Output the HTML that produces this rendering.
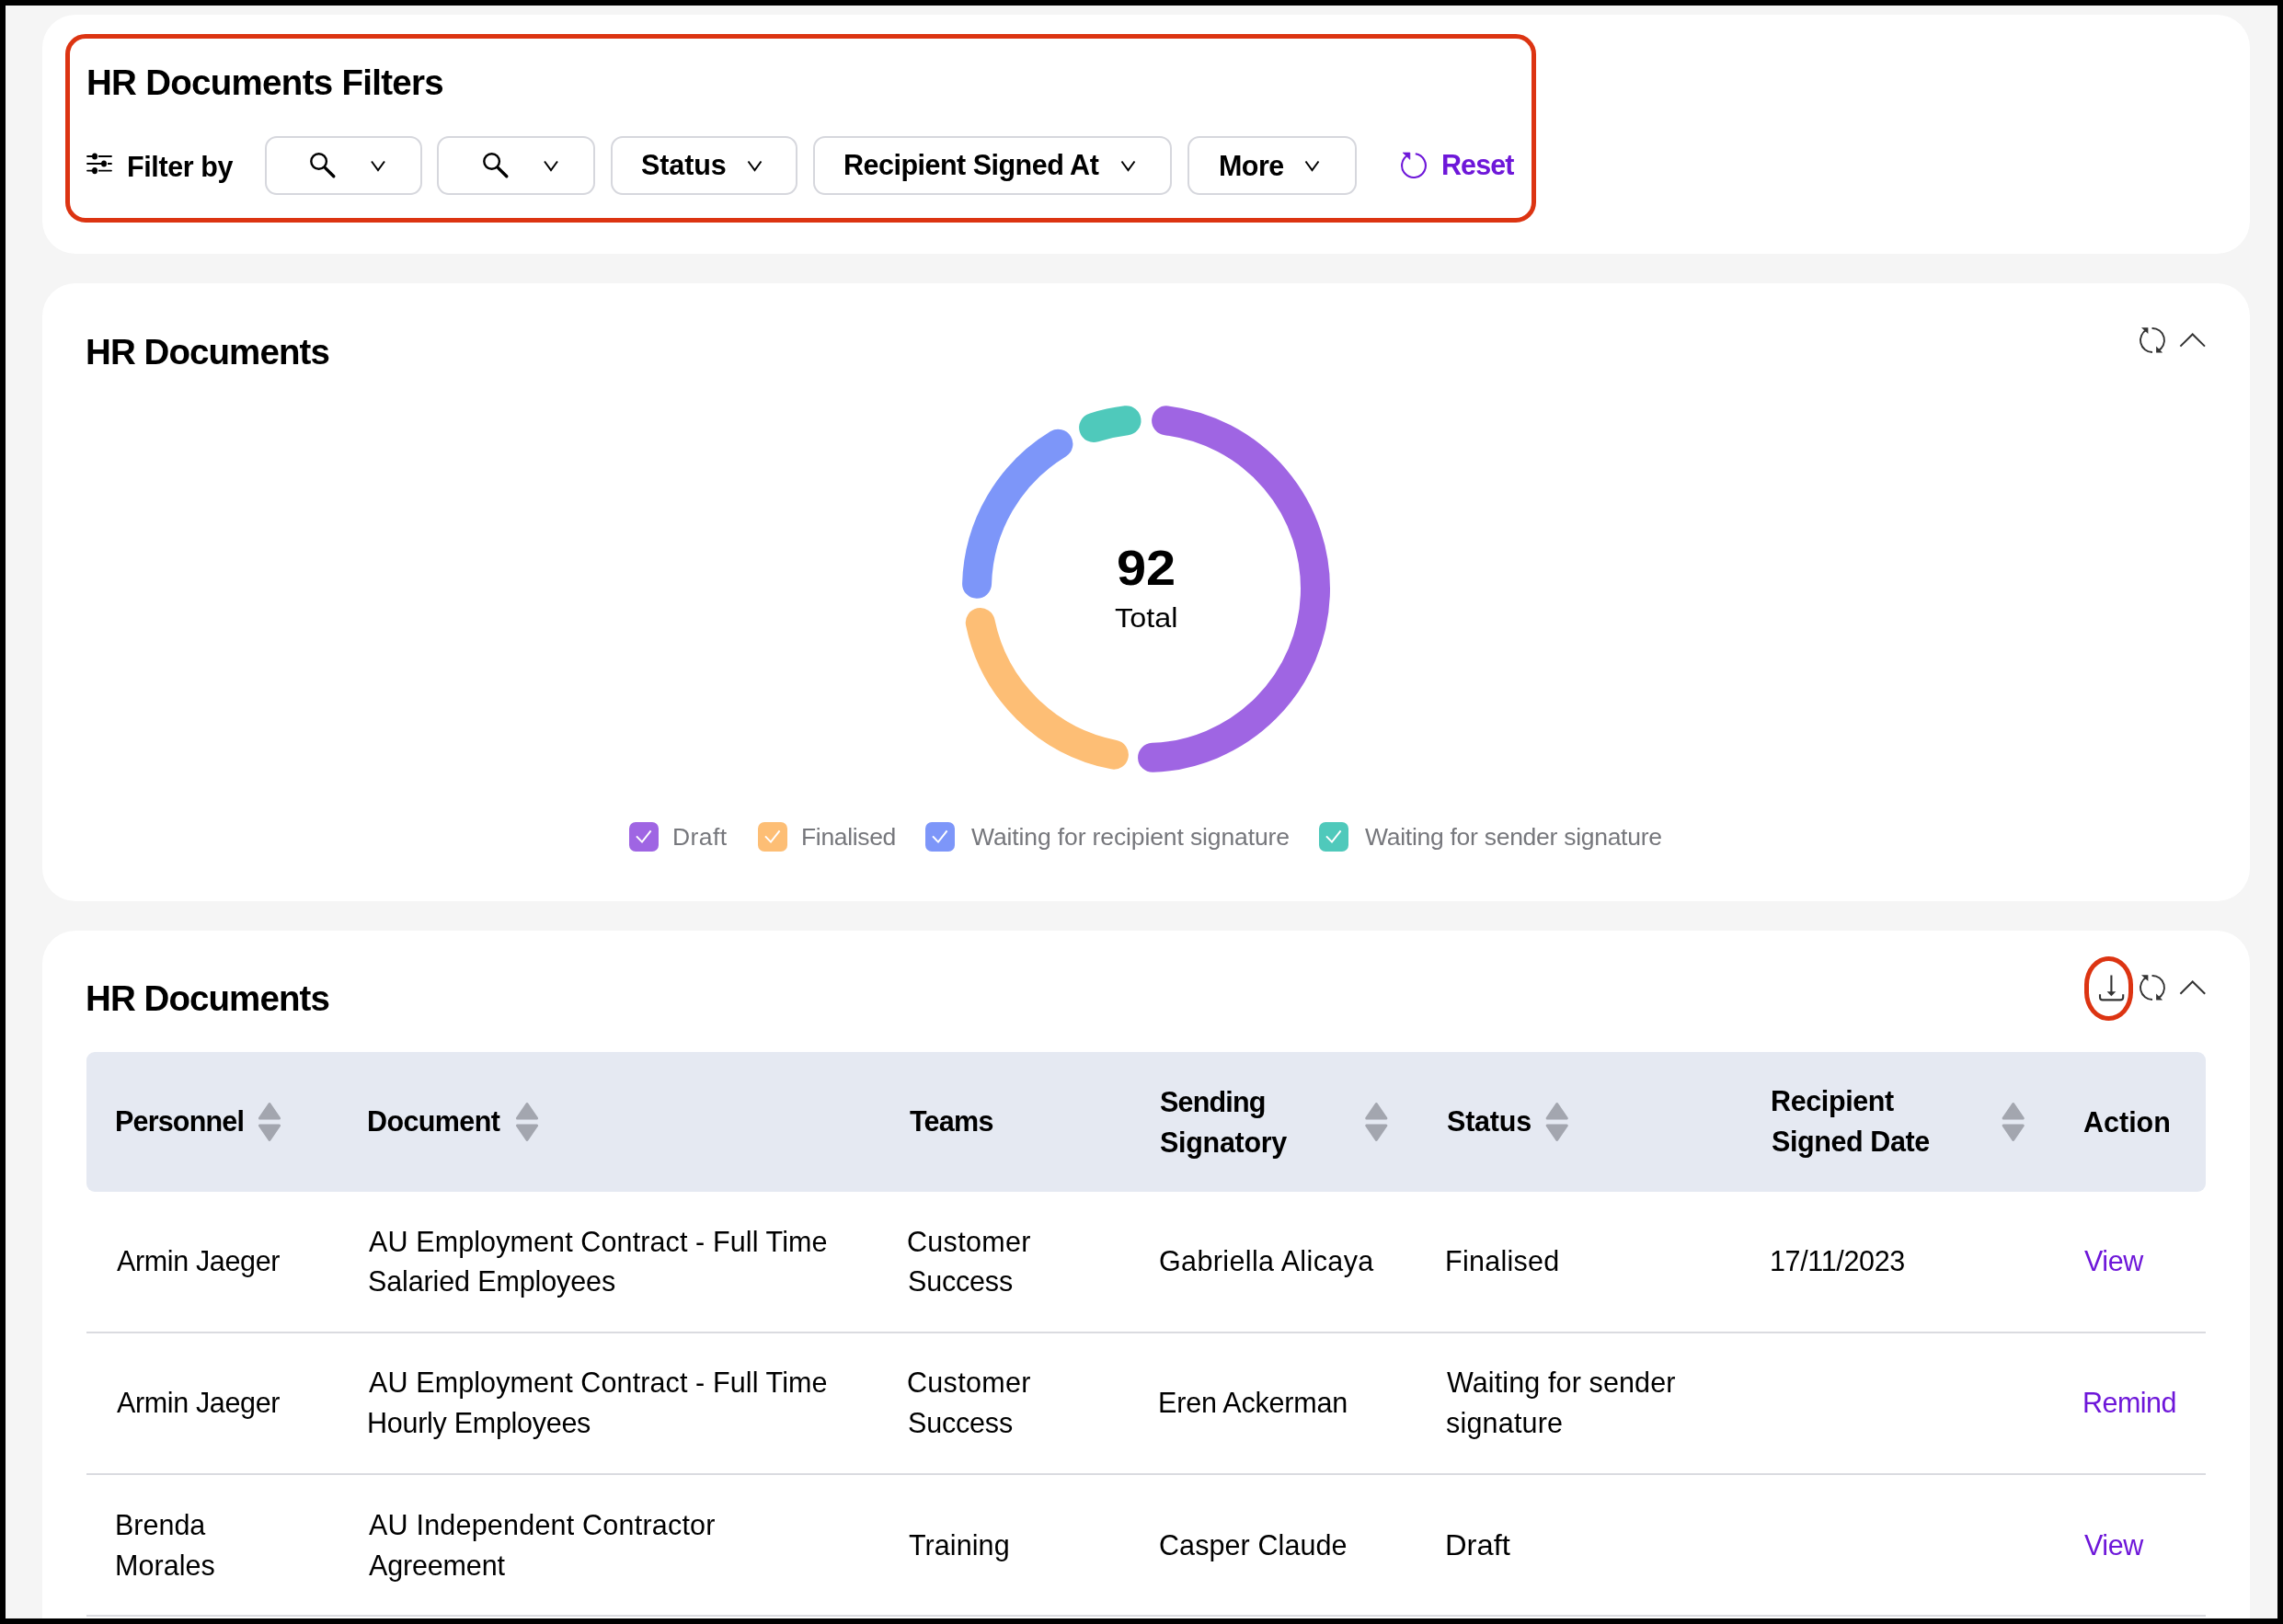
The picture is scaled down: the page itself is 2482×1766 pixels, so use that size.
<!DOCTYPE html>
<html lang="en">
<head>
<meta charset="utf-8">
<title>HR Documents</title>
<style>
html,body{margin:0;padding:0;}
body{width:2482px;height:1766px;background:#000;overflow:hidden;position:relative;font-family:"Liberation Sans",sans-serif;color:#000;}
.page{position:absolute;left:6px;top:6px;width:2470px;height:1754px;background:#F5F5F5;overflow:hidden;}
.card{position:absolute;left:40px;width:2400px;background:#fff;border-radius:36px;}
.abs{position:absolute;}
.t{position:absolute;line-height:0;white-space:pre;will-change:transform;}
.hl{position:absolute;border:5px solid #DC3412;box-sizing:border-box;}
.dd{position:absolute;top:148px;height:64px;border:2px solid #D6D7DD;border-radius:13px;box-sizing:border-box;background:#fff;}
.cb{position:absolute;top:894px;width:32px;height:32px;border-radius:7px;}
.sep{position:absolute;left:94px;width:2304px;height:2px;background:#DADBE0;}
svg{position:absolute;overflow:visible;}
</style>
</head>
<body>
<div class="page">
  <div class="card" style="top:10px;height:260px;"></div>
  <div class="card" style="top:302px;height:672px;"></div>
  <div class="card" style="top:1006px;height:800px;"></div>
</div>

<!-- filter highlight box -->
<div class="hl" style="left:71px;top:37px;width:1599px;height:205px;border-radius:22px;"></div>

<!-- dropdown boxes -->
<div class="dd" style="left:288px;width:171px;"></div>
<div class="dd" style="left:475px;width:172px;"></div>
<div class="dd" style="left:664px;width:203px;"></div>
<div class="dd" style="left:884px;width:390px;"></div>
<div class="dd" style="left:1291px;width:184px;"></div>

<!-- table header -->
<div class="abs" style="left:94px;top:1144px;width:2304px;height:152px;background:#E5E9F2;border-radius:9px;"></div>
<div class="sep" style="top:1448px;"></div>
<div class="sep" style="top:1602px;"></div>
<div class="sep" style="top:1756px;"></div>

<svg width="2482" height="1766" style="left:0;top:0" viewBox="0 0 2482 1766">
<line x1="95" y1="170" x2="121" y2="170" stroke="#000" stroke-width="1.8" stroke-linecap="round"/>
<rect x="99" y="165" width="8" height="10" fill="#fff"/>
<ellipse cx="103" cy="170" rx="3" ry="3.6" fill="#000"/>
<line x1="99" y1="170" x2="103" y2="170" stroke="#000" stroke-width="2"/>
<line x1="95" y1="178" x2="121" y2="178" stroke="#000" stroke-width="1.8" stroke-linecap="round"/>
<rect x="109" y="173" width="8" height="10" fill="#fff"/>
<ellipse cx="113" cy="178" rx="3" ry="3.6" fill="#000"/>
<line x1="109" y1="178" x2="113" y2="178" stroke="#000" stroke-width="2"/>
<line x1="95" y1="185.6" x2="121" y2="185.6" stroke="#000" stroke-width="1.8" stroke-linecap="round"/>
<rect x="99" y="180.6" width="8" height="10" fill="#fff"/>
<ellipse cx="103" cy="185.6" rx="3" ry="3.6" fill="#000"/>
<line x1="99" y1="185.6" x2="103" y2="185.6" stroke="#000" stroke-width="2"/>
<circle cx="346.6" cy="175.5" r="8.3" fill="none" stroke="#000" stroke-width="2.4"/>
<line x1="353.6" y1="182.6" x2="362.8" y2="191.8" stroke="#000" stroke-width="3.4" stroke-linecap="round"/>
<circle cx="534.6" cy="175.5" r="8.3" fill="none" stroke="#000" stroke-width="2.4"/>
<line x1="541.6" y1="182.6" x2="550.8" y2="191.8" stroke="#000" stroke-width="3.4" stroke-linecap="round"/>
<polyline points="404,175.5 411,185 418,175.5" fill="none" stroke="#000" stroke-width="2" stroke-linejoin="miter"/>
<polyline points="592,175.5 599,185 606,175.5" fill="none" stroke="#000" stroke-width="2" stroke-linejoin="miter"/>
<polyline points="813.5,175.5 820.5,185 827.5,175.5" fill="none" stroke="#000" stroke-width="2" stroke-linejoin="miter"/>
<polyline points="1219.5,175.5 1226.5,185 1233.5,175.5" fill="none" stroke="#000" stroke-width="2" stroke-linejoin="miter"/>
<polyline points="1419.5,175.5 1426.5,185 1433.5,175.5" fill="none" stroke="#000" stroke-width="2" stroke-linejoin="miter"/>
<path d="M1538.80 167.23A12.9 12.9 0 1 1 1530.94 168.61" fill="none" stroke="#6E17D9" stroke-width="2.1"/>
<polygon points="1525.2,166.1 1532.8,166.1 1532.8,173.3" fill="#6E17D9" stroke="#6E17D9" stroke-width="0.8" stroke-linejoin="round"/>
<path d="M2340.00 383.00A13 13 0 0 1 2334.10 358.42" fill="none" stroke="#333" stroke-width="1.9"/>
<path d="M2339.55 357.01A13 13 0 0 1 2345.90 381.58" fill="none" stroke="#333" stroke-width="1.9"/>
<polygon points="2328.00,356.30 2335.40,356.30 2335.40,363.00" fill="#333"/>
<polygon points="2344.10,376.60 2344.10,383.60 2351.10,383.60" fill="#333"/>
<path d="M2340.00 1087.00A13 13 0 0 1 2334.10 1062.42" fill="none" stroke="#333" stroke-width="1.9"/>
<path d="M2339.55 1061.01A13 13 0 0 1 2345.90 1085.58" fill="none" stroke="#333" stroke-width="1.9"/>
<polygon points="2328.00,1060.30 2335.40,1060.30 2335.40,1067.00" fill="#333"/>
<polygon points="2344.10,1080.60 2344.10,1087.60 2351.10,1087.60" fill="#333"/>
<polyline points="2370.4,376.6 2383.7,363.5 2397,376.6" fill="none" stroke="#333" stroke-width="2"/>
<polyline points="2370.4,1080.8 2383.7,1067.5 2397.2,1080.8" fill="none" stroke="#333" stroke-width="2"/>
<line x1="2295.4" y1="1060.5" x2="2295.4" y2="1079" stroke="#333" stroke-width="2.1"/>
<polygon points="2290.6,1078.2 2300.3,1078.2 2295.4,1083.2" fill="#333"/>
<path d="M2283 1081.2V1084.4Q2283 1087.4 2286 1087.4H2305Q2308.2 1087.4 2308.2 1084.4V1081.2" fill="none" stroke="#333" stroke-width="2.1"/>
<path d="M1268.11 457.33A184 184 0 0 1 1253.06 823.86" fill="none" stroke="#9F65E3" stroke-width="32" stroke-linecap="round"/>
<path d="M1210.89 820.62A184 184 0 0 1 1065.76 677.00" fill="none" stroke="#FDBE75" stroke-width="32" stroke-linecap="round"/>
<path d="M1062.07 634.86A184 184 0 0 1 1150.41 482.78" fill="none" stroke="#7D96F9" stroke-width="32" stroke-linecap="round"/>
<path d="M1189.14 465.01A184 184 0 0 1 1224.53 457.26" fill="none" stroke="#4FC9BB" stroke-width="32" stroke-linecap="round"/>
<rect x="684" y="894" width="32" height="32" rx="7" fill="#9F65E3"/>
<polyline points="692,909.4 698,915.6 707.6,903.4" fill="none" stroke="#fff" stroke-width="2"/>
<rect x="824" y="894" width="32" height="32" rx="7" fill="#FDBE75"/>
<polyline points="832,909.4 838,915.6 847.6,903.4" fill="none" stroke="#fff" stroke-width="2"/>
<rect x="1006" y="894" width="32" height="32" rx="7" fill="#7D96F9"/>
<polyline points="1014,909.4 1020,915.6 1029.6,903.4" fill="none" stroke="#fff" stroke-width="2"/>
<rect x="1434" y="894" width="32" height="32" rx="7" fill="#4FC9BB"/>
<polyline points="1442,909.4 1448,915.6 1457.6,903.4" fill="none" stroke="#fff" stroke-width="2"/>
<polygon points="293,1200.5 303.6,1216 282.4,1216" fill="#A3A6AF" stroke="#A3A6AF" stroke-width="3" stroke-linejoin="round"/>
<polygon points="282.4,1224 303.6,1224 293,1239.5" fill="#A3A6AF" stroke="#A3A6AF" stroke-width="3" stroke-linejoin="round"/>
<polygon points="573,1200.5 583.6,1216 562.4,1216" fill="#A3A6AF" stroke="#A3A6AF" stroke-width="3" stroke-linejoin="round"/>
<polygon points="562.4,1224 583.6,1224 573,1239.5" fill="#A3A6AF" stroke="#A3A6AF" stroke-width="3" stroke-linejoin="round"/>
<polygon points="1496.3,1200.5 1506.8999999999999,1216 1485.7,1216" fill="#A3A6AF" stroke="#A3A6AF" stroke-width="3" stroke-linejoin="round"/>
<polygon points="1485.7,1224 1506.8999999999999,1224 1496.3,1239.5" fill="#A3A6AF" stroke="#A3A6AF" stroke-width="3" stroke-linejoin="round"/>
<polygon points="1692.7,1200.5 1703.3,1216 1682.1000000000001,1216" fill="#A3A6AF" stroke="#A3A6AF" stroke-width="3" stroke-linejoin="round"/>
<polygon points="1682.1000000000001,1224 1703.3,1224 1692.7,1239.5" fill="#A3A6AF" stroke="#A3A6AF" stroke-width="3" stroke-linejoin="round"/>
<polygon points="2188.7,1200.5 2199.2999999999997,1216 2178.1,1216" fill="#A3A6AF" stroke="#A3A6AF" stroke-width="3" stroke-linejoin="round"/>
<polygon points="2178.1,1224 2199.2999999999997,1224 2188.7,1239.5" fill="#A3A6AF" stroke="#A3A6AF" stroke-width="3" stroke-linejoin="round"/>
</svg>
<div class="abs" style="left:2266px;top:1040px;width:53px;height:70px;border:5px solid #DC3412;box-sizing:border-box;border-radius:50% / 44%;"></div>


<div class="t" style="left:93.69px;top:90.00px;font-size:38.5px;letter-spacing:-0.709px;font-weight:700">HR Documents Filters</div>
<div class="t" style="left:92.99px;top:382.60px;font-size:38.5px;letter-spacing:-0.922px;font-weight:700">HR Documents</div>
<div class="t" style="left:92.99px;top:1086.30px;font-size:38.5px;letter-spacing:-0.922px;font-weight:700">HR Documents</div>
<div class="t" style="left:138.17px;top:181.00px;font-size:30.5px;letter-spacing:-0.390px;font-weight:700">Filter by</div>
<div class="t" style="left:697.39px;top:179.00px;font-size:30.5px;letter-spacing:-0.100px;font-weight:700">Status</div>
<div class="t" style="left:917.17px;top:179.00px;font-size:30.5px;letter-spacing:-0.509px;font-weight:700">Recipient Signed At</div>
<div class="t" style="left:1324.67px;top:179.50px;font-size:30.5px;letter-spacing:-0.581px;font-weight:700">More</div>
<div class="t" style="left:1566.67px;top:179.00px;font-size:30.5px;letter-spacing:-0.912px;font-weight:700;color:#6E17D9">Reset</div>
<div class="t" style="left:1213.87px;top:618.00px;font-size:53px;transform:scaleX(1.0893);transform-origin:0 0;font-weight:700">92</div>
<div class="t" style="left:1212.35px;top:672.00px;font-size:30px;transform:scaleX(1.0787);transform-origin:0 0">Total</div>
<div class="t" style="left:731.28px;top:910.00px;font-size:26.5px;letter-spacing:0.434px;color:#76777C">Draft</div>
<div class="t" style="left:870.88px;top:910.00px;font-size:26.5px;letter-spacing:-0.343px;color:#76777C">Finalised</div>
<div class="t" style="left:1056.00px;top:910.00px;font-size:26.5px;letter-spacing:-0.120px;color:#76777C">Waiting for recipient signature</div>
<div class="t" style="left:1484.00px;top:910.00px;font-size:26.5px;letter-spacing:-0.277px;color:#76777C">Waiting for sender signature</div>
<div class="t" style="left:125.17px;top:1219.40px;font-size:30.5px;letter-spacing:-0.821px;font-weight:700">Personnel</div>
<div class="t" style="left:399.17px;top:1219.40px;font-size:30.5px;letter-spacing:-0.600px;font-weight:700">Document</div>
<div class="t" style="left:988.70px;top:1219.00px;font-size:30.5px;letter-spacing:-0.742px;font-weight:700">Teams</div>
<div class="t" style="left:1260.99px;top:1197.60px;font-size:30.5px;letter-spacing:-0.823px;font-weight:700">Sending</div>
<div class="t" style="left:1260.99px;top:1241.50px;font-size:30.5px;letter-spacing:-0.296px;font-weight:700">Signatory</div>
<div class="t" style="left:1572.89px;top:1219.00px;font-size:30.5px;letter-spacing:-0.200px;font-weight:700">Status</div>
<div class="t" style="left:1924.87px;top:1197.00px;font-size:30.5px;letter-spacing:-0.382px;font-weight:700">Recipient</div>
<div class="t" style="left:1926.09px;top:1241.00px;font-size:30.5px;letter-spacing:-0.405px;font-weight:700">Signed Date</div>
<div class="t" style="left:2265.39px;top:1219.50px;font-size:30.5px;letter-spacing:-0.003px;font-weight:700">Action</div>
<div class="t" style="left:127.00px;top:1371.00px;font-size:30.5px;letter-spacing:-0.362px">Armin Jaeger</div>
<div class="t" style="left:401.00px;top:1349.50px;font-size:30.5px;letter-spacing:0.110px">AU Employment Contract - Full Time</div>
<div class="t" style="left:399.78px;top:1393.00px;font-size:30.5px;letter-spacing:-0.125px">Salaried Employees</div>
<div class="t" style="left:986.48px;top:1349.50px;font-size:30.5px;letter-spacing:0.303px">Customer</div>
<div class="t" style="left:986.78px;top:1393.00px;font-size:30.5px;letter-spacing:-0.189px">Success</div>
<div class="t" style="left:1259.97px;top:1371.00px;font-size:30.5px;letter-spacing:0.378px">Gabriella Alicaya</div>
<div class="t" style="left:1570.56px;top:1371.00px;font-size:30.5px;letter-spacing:0.262px">Finalised</div>
<div class="t" style="left:1923.87px;top:1371.00px;font-size:30.5px;letter-spacing:-0.350px">17/11/2023</div>
<div class="t" style="left:2266.30px;top:1371.00px;font-size:30.5px;letter-spacing:-0.432px;color:#6E17D9">View</div>
<div class="t" style="left:127.00px;top:1525.00px;font-size:30.5px;letter-spacing:-0.362px">Armin Jaeger</div>
<div class="t" style="left:401.00px;top:1503.20px;font-size:30.5px;letter-spacing:0.110px">AU Employment Contract - Full Time</div>
<div class="t" style="left:398.56px;top:1546.50px;font-size:30.5px;letter-spacing:-0.275px">Hourly Employees</div>
<div class="t" style="left:986.48px;top:1503.20px;font-size:30.5px;letter-spacing:0.303px">Customer</div>
<div class="t" style="left:986.78px;top:1546.50px;font-size:30.5px;letter-spacing:-0.189px">Success</div>
<div class="t" style="left:1259.06px;top:1525.00px;font-size:30.5px;letter-spacing:-0.187px">Eren Ackerman</div>
<div class="t" style="left:1573.00px;top:1503.20px;font-size:30.5px;letter-spacing:0.119px">Waiting for sender</div>
<div class="t" style="left:1572.39px;top:1546.50px;font-size:30.5px;letter-spacing:0.193px">signature</div>
<div class="t" style="left:2263.86px;top:1525.00px;font-size:30.5px;letter-spacing:-0.549px;color:#6E17D9">Remind</div>
<div class="t" style="left:124.56px;top:1658.00px;font-size:30.5px;letter-spacing:-0.006px">Brenda</div>
<div class="t" style="left:124.56px;top:1702.00px;font-size:30.5px;letter-spacing:0.063px">Morales</div>
<div class="t" style="left:401.00px;top:1658.00px;font-size:30.5px;letter-spacing:0.212px">AU Independent Contractor</div>
<div class="t" style="left:401.00px;top:1702.00px;font-size:30.5px;letter-spacing:-0.157px">Agreement</div>
<div class="t" style="left:988.09px;top:1679.60px;font-size:30.5px;letter-spacing:0.081px">Training</div>
<div class="t" style="left:1260.47px;top:1679.60px;font-size:30.5px;letter-spacing:0.090px">Casper Claude</div>
<div class="t" style="left:1570.58px;top:1679.60px;font-size:30.5px;transform:scaleX(1.0719);transform-origin:0 0">Draft</div>
<div class="t" style="left:2266.30px;top:1679.60px;font-size:30.5px;letter-spacing:-0.432px;color:#6E17D9">View</div>
</body>
</html>
